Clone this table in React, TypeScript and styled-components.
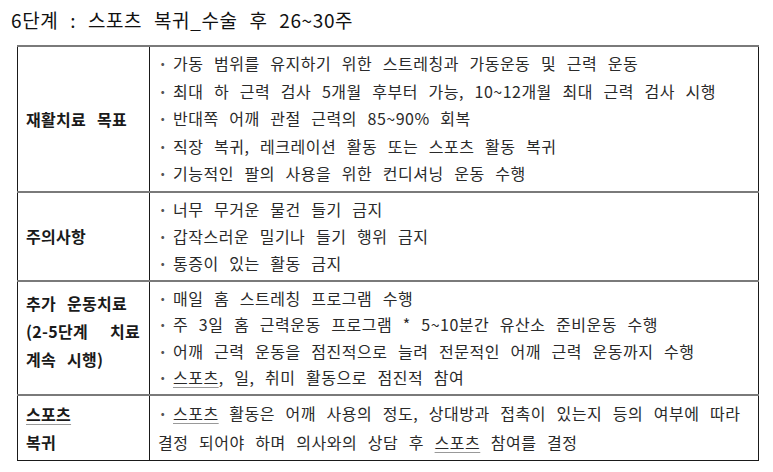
import { FC } from 'react'
import styled, { createGlobalStyle } from 'styled-components'

const GlobalStyle = createGlobalStyle`
  body {
    margin: 0;
    background: #fff;
    font-family: 'Noto Sans CJK KR', 'Noto Sans', sans-serif;
    color: #222;
  }
`

interface Row {
  label: string[]
  items: string[]
  top?: boolean
  lh: number
}

const rows: Row[] = [
  {
    label: ['재활치료 목표'],
    lh: 27.6,
    items: [
      '가동 범위를 유지하기 위한 스트레칭과 가동운동 및 근력 운동',
      '최대 하 근력 검사 5개월 후부터 가능, 10~12개월 최대 근력 검사 시행',
      '반대쪽 어깨 관절 근력의 85~90% 회복',
      '직장 복귀, 레크레이션 활동 또는 스포츠 활동 복귀',
      '기능적인 팔의 사용을 위한 컨디셔닝 운동 수행'
    ]
  },
  {
    label: ['주의사항'],
    lh: 27,
    items: ['너무 무거운 물건 들기 금지', '갑작스러운 밀기나 들기 행위 금지', '통증이 있는 활동 금지']
  },
  {
    label: ['추가 운동치료', '(2-5단계 치료', '계속 시행)'],
    top: true,
    lh: 26.4,
    items: [
      '매일 홈 스트레칭 프로그램 수행',
      '주 3일 홈 근력운동 프로그램 * 5~10분간 유산소 준비운동 수행',
      '어깨 근력 운동을 점진적으로 늘려 전문적인 어깨 근력 운동까지 수행',
      '#스포츠, 일, 취미 활동으로 점진적 참여'
    ]
  }
]

// '#' marks a line that opens with the underlined word 스포츠
const mark = (text: string) => {
  if (!text.startsWith('#')) return text
  return (
    <>
      <Marked>스포츠</Marked>
      {text.slice(4)}
    </>
  )
}

const App: FC = () => (
  <Page>
    <GlobalStyle />
    <Title>6단계 : 스포츠 복귀_수술 후 26~30주</Title>
    <Table>
      <colgroup>
        <col style={{ width: 132 }} />
        <col />
      </colgroup>
      <tbody>
        {rows.map((row, i) => (
          <Tr key={i}>
            <Label $top={row.top}>
              {row.label.map((l, j) => (
                <LabelLine key={j} $wide={l.startsWith('(')}>
                  {l}
                </LabelLine>
              ))}
            </Label>
            <Content>
              {row.items.map((item, j) => (
                <Item key={j} $lh={row.lh}>
                  <Dot>·</Dot>
                  <span>{mark(item)}</span>
                </Item>
              ))}
            </Content>
          </Tr>
        ))}
        <Tr>
          <Label>
            <LabelLine>
              <Marked>스포츠</Marked>
            </LabelLine>
            <LabelLine>복귀</LabelLine>
          </Label>
          <Content>
            <Item $lh={29}>
              <Dot>·</Dot>
              <Marked>스포츠</Marked> 활동은 어깨 사용의 정도, 상대방과 접촉이 있는지 등의 여부에 따라
            </Item>
            <Item $lh={29}>
              결정 되어야 하며 의사와의 상담 후 <Marked>스포츠</Marked> 참여를 결정
            </Item>
          </Content>
        </Tr>
      </tbody>
    </Table>
  </Page>
)

const Page = styled.div`
  width: 773px;
  height: 472px;
  padding: 7px 0 0 11px;
  box-sizing: border-box;
  overflow: hidden;
`

const Title = styled.div`
  font-size: 19px;
  line-height: 26px;
  color: #111;
  letter-spacing: 0.6px;
  word-spacing: 7px;
  margin-bottom: 12px;
`

const Table = styled.table`
  margin-left: 6px;
  width: 742px;
  border-collapse: collapse;
  table-layout: fixed;
  border-bottom: 1px solid #1a1a1a;
`

const Tr = styled.tr`
  border-top: 2px solid #7a7a7a;
`

const Label = styled.td<{ $top?: boolean }>`
  border-left: 1px solid #1a1a1a;
  border-right: 1px solid #1a1a1a;
  padding: ${(p) => (p.$top ? '0 0 14px 8px' : '2px 0 2px 8px')};
  vertical-align: middle;
  font-weight: 700;
  font-size: 16px;
  letter-spacing: 0.3px;
  color: #1a1a1a;
`

const LabelLine = styled.div<{ $wide?: boolean }>`
  line-height: 28px;
  white-space: nowrap;
  word-spacing: ${(p) => (p.$wide ? '18px' : '7px')};
`

const Content = styled.td`
  border-right: 1px solid #1a1a1a;
  padding: 3px 0 3px 8px;
  vertical-align: middle;
  font-size: 16px;
  letter-spacing: 0.5px;
  color: #2a2a2a;
`

const Item = styled.div<{ $lh: number }>`
  line-height: ${(p) => p.$lh}px;
  white-space: nowrap;
  word-spacing: 6.5px;
`

const Dot = styled.span`
  display: inline-block;
  width: 15px;
  font-weight: 700;
  color: #555;
`

const Marked = styled.span`
  text-decoration: underline;
  text-decoration-color: #999;
  text-decoration-thickness: 1px;
  text-underline-offset: 3px;
`

export default App
